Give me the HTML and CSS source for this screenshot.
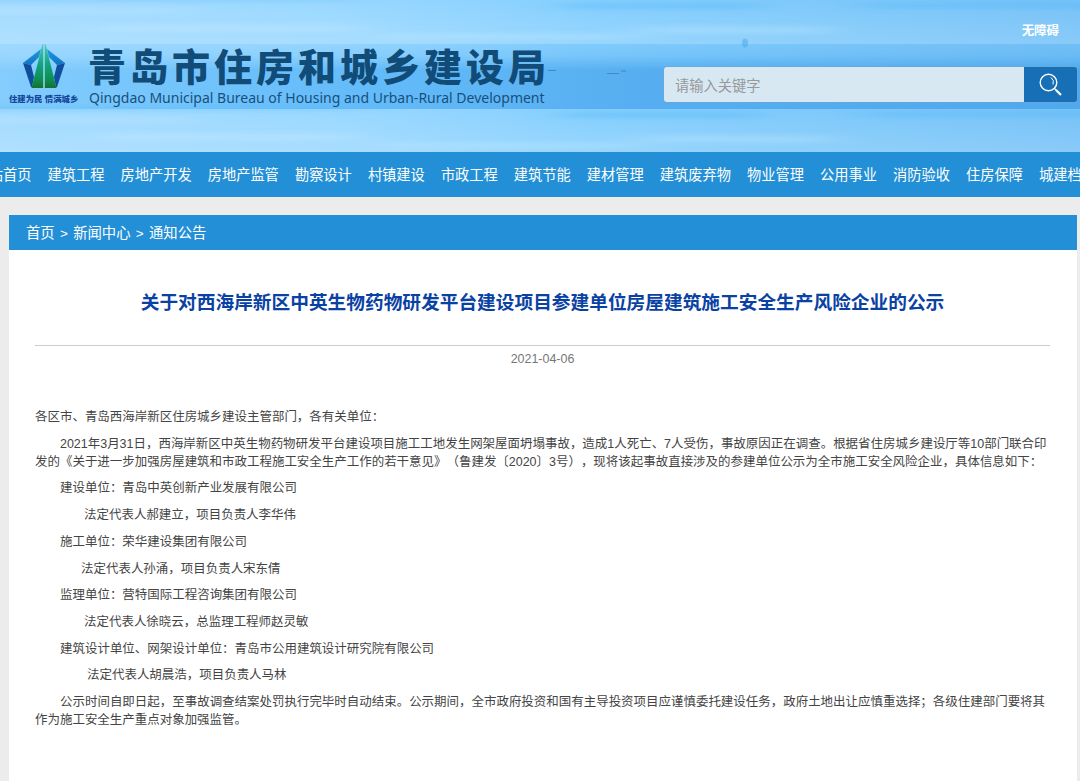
FILE: index.html
```html
<!DOCTYPE html>
<html lang="zh-CN">
<head>
    <meta charset="UTF-8">
    <meta name="viewport" content="width=device-width, initial-scale=1.0">
    <title>青岛市住房和城乡建设局</title>
    <link rel="stylesheet" href="styles.css">
</head>
<body>
    <header class="header">
        <!-- sea and sky backdrop -->
        <svg class="sky" width="1080" height="152" viewBox="0 0 1080 152" preserveAspectRatio="none" aria-hidden="true">
            <defs>
                <linearGradient id="air" x1="0" x2="1" y1="0" y2="0">
                    <stop offset="0" stop-color="#a3dbff"/>
                    <stop offset=".3" stop-color="#9ad8ff"/>
                    <stop offset=".55" stop-color="#85cffe"/>
                    <stop offset="1" stop-color="#76c2f7"/>
                </linearGradient>
                <linearGradient id="sea" x1="0" x2="1" y1="0" y2="0">
                    <stop offset="0" stop-color="#84cdfd"/>
                    <stop offset=".3" stop-color="#66bdfa"/>
                    <stop offset=".6" stop-color="#56aef0"/>
                    <stop offset="1" stop-color="#4fa9ec"/>
                </linearGradient>
                <linearGradient id="fade" x1="0" x2="0" y1="0" y2="1">
                    <stop offset="0" stop-color="#fff" stop-opacity="0"/>
                    <stop offset="1" stop-color="#fff" stop-opacity=".14"/>
                </linearGradient>
                <linearGradient id="top" x1="0" x2="0" y1="0" y2="1">
                    <stop offset="0" stop-color="#fff" stop-opacity=".12"/>
                    <stop offset=".18" stop-color="#fff" stop-opacity=".3"/>
                    <stop offset=".4" stop-color="#fff" stop-opacity="1"/>
                </linearGradient>
                <mask id="seamask"><rect y="44" width="1080" height="65" fill="url(#top)"/></mask>
                <filter id="soft" filterUnits="userSpaceOnUse" x="-60" y="-20" width="1200" height="90"><feGaussianBlur stdDeviation="22 2.500"/></filter>
                <g id="clouds" filter="url(#soft)">
                    <path d="M-40 -2h400v3H-40zM560 3h200v6H560zM860 3h260v5H860z" fill="#4fb4f7" opacity=".4"/>
                    <path d="M-40 9h230v4H-40zM100 25h260v6H100zM380 34h260v5H380zM640 27h190v6H640z" fill="#d6f0ff" opacity=".28"/>
                </g>
            </defs>
            <rect width="1080" height="152" fill="url(#air)"/>
            <rect width="1080" height="44" fill="url(#fade)"/>
            <use href="#clouds"/>
            <rect y="44" width="1080" height="65" fill="url(#sea)" mask="url(#seamask)"/>
            <rect y="109" width="1080" height="43" fill="url(#fade)"/>
            <use href="#clouds" y="109"/>
            <path d="M607 73.500h12M621 71h5M548 70.500h8" stroke="#3b8cc9" stroke-width="1"/>
            <ellipse cx="745" cy="43" rx="3" ry="4.500" fill="#4aa6e4" opacity=".5"/>
        </svg>

        <div class="brand">
            <div class="emblem">
                <svg width="44" height="46" viewBox="0 0 44 46">
                    <defs>
                        <linearGradient id="tower" x1="0" x2="0" y1="0" y2="1">
                            <stop offset="0" stop-color="#4fc9c4"/>
                            <stop offset=".45" stop-color="#12a482"/>
                            <stop offset=".8" stop-color="#0c8f55"/>
                            <stop offset="1" stop-color="#157030"/>
                        </linearGradient>
                        <linearGradient id="wing" x1="0" x2="0" y1="0" y2="1">
                            <stop offset="0" stop-color="#1d9be2"/>
                            <stop offset="1" stop-color="#1273c2"/>
                        </linearGradient>
                    </defs>
                    <path d="M19 6L1 20l8 2 8-8z" fill="url(#wing)"/>
                    <path d="M25 6l18 14-8 2-8-8z" fill="url(#wing)"/>
                    <path d="M1 20l8 2 3 12-2 10H9z" fill="#114d9d"/>
                    <path d="M43 20l-8 2-3 12 2 10h1z" fill="#114d9d"/>
                    <path d="M20.500 1h1v44H9.500z" fill="url(#tower)"/>
                    <path d="M23.500 1h-1v44h12z" fill="url(#tower)"/>
                    <path d="M22 1v44" stroke="#a5dcec" stroke-width="1"/>
                </svg>
                <span class="slogan">住建为民 情满城乡</span>
            </div>
            <div class="names">
                <div class="name-cn">青岛市住房和城乡建设局</div>
                <div class="name-en">Qingdao Municipal Bureau of Housing and Urban-Rural Development</div>
            </div>
        </div>

        <div class="tools">
            <a class="barrier-free">无障碍</a>
            <form class="search">
                <input type="text" placeholder="请输入关键字">
                <button type="button" aria-label="搜索">
                    <svg width="24" height="24" viewBox="0 0 24 24" fill="none" stroke="#fff">
                        <circle cx="9.500" cy="9.500" r="8.300" stroke-width="1.400"/>
                        <path d="M12 4.500q3.500 2.500 2 7" stroke-width="1"/>
                        <path d="M15.500 15.500l2 2" stroke-width="1.300"/>
                        <path d="M17 17l5 5" stroke-width="2.200"/>
                    </svg>
                </button>
            </form>
        </div>
    </header>

    <nav class="nav">
        <a>网站首页</a>
        <a>建筑工程</a>
        <a>房地产开发</a>
        <a>房地产监管</a>
        <a>勘察设计</a>
        <a>村镇建设</a>
        <a>市政工程</a>
        <a>建筑节能</a>
        <a>建材管理</a>
        <a>建筑废弃物</a>
        <a>物业管理</a>
        <a>公用事业</a>
        <a>消防验收</a>
        <a>住房保障</a>
        <a>城建档案</a>
    </nav>

    <main class="main">
        <div class="crumbs"><a>首页</a><span>&gt;</span><a>新闻中心</a><span>&gt;</span><a>通知公告</a></div>
        <article class="article">
            <h1>关于对西海岸新区中英生物药物研发平台建设项目参建单位房屋建筑施工安全生产风险企业的公示</h1>
            <div class="date">2021-04-06</div>
            <div class="content">
                <p>各区市、青岛西海岸新区住房城乡建设主管部门，各有关单位：</p>
                <p class="indent">2021年3月31日，西海岸新区中英生物药物研发平台建设项目施工工地发生网架屋面坍塌事故，造成1人死亡、7人受伤，事故原因正在调查。根据省住房城乡建设厅等10部门联合印<br>发的《关于进一步加强房屋建筑和市政工程施工安全生产工作的若干意见》（鲁建发〔2020〕3号），现将该起事故直接涉及的参建单位公示为全市施工安全风险企业，具体信息如下：</p>
                <p class="indent">建设单位：青岛中英创新产业发展有限公司</p>
                <p class="person">法定代表人郝建立，项目负责人李华伟</p>
                <p class="indent">施工单位：荣华建设集团有限公司</p>
                <p class="person near">法定代表人孙涌，项目负责人宋东倩</p>
                <p class="indent">监理单位：营特国际工程咨询集团有限公司</p>
                <p class="person">法定代表人徐晓云，总监理工程师赵灵敏</p>
                <p class="indent">建筑设计单位、网架设计单位：青岛市公用建筑设计研究院有限公司</p>
                <p class="person far">法定代表人胡晨浩，项目负责人马林</p>
                <p class="indent">公示时间自即日起，至事故调查结案处罚执行完毕时自动结束。公示期间，全市政府投资和国有主导投资项目应谨慎委托建设任务，政府土地出让应慎重选择；各级住建部门要将其<br>作为施工安全生产重点对象加强监管。</p>
            </div>
        </article>
    </main>
</body>
</html>
```

FILE: styles.css
```css
* { box-sizing: border-box; }
body { margin: 0; height: 781px; display: flex; flex-direction: column; overflow: hidden; background: #ececec; color: #444; font-family: "Liberation Sans", "Noto Sans CJK SC", sans-serif; text-spacing-trim: space-all; }
.header { position: relative; flex: none; height: 152px; display: flex; justify-content: space-between; padding: 0 3px 0 9px; }
.sky { position: absolute; left: 0; top: 0; }
.brand { position: relative; display: flex; padding-top: 43px; }
.emblem { width: 79px; display: flex; flex-direction: column; align-items: flex-start; }
.emblem svg { margin-left: 13px; }
.slogan { margin-top: 4px; font-size: 8.400px; line-height: 12px; font-weight: 900; color: #15489c; white-space: nowrap; }
.names { color: #114b77; white-space: nowrap; }
.name-cn { height: 45px; font-family: "Noto Sans CJK SC", sans-serif; font-size: 38px; line-height: 43px; font-weight: 900; letter-spacing: 4px; }
.name-en { margin-left: 1px; font-family: "Noto Sans", sans-serif; font-size: 14px; line-height: 20px; color: #17507d; }

.tools { position: relative; width: 413px; display: flex; flex-direction: column; }
.barrier-free { align-self: flex-end; margin: 22px 18px 0 0; font-size: 12.460px; line-height: 18px; font-weight: bold; color: #fff; }
.search { display: flex; margin-top: 27px; height: 35px; border-radius: 3px; box-shadow: 0 0 0 1px rgba(130,160,185,0.35); overflow: hidden; }
.search input { flex: 1; min-width: 0; padding: 0 11px; border: none; background: #d7e8f3; font: 14.240px "Noto Sans CJK SC", sans-serif; }
.search input::placeholder { color: #999; }
.search button { width: 53px; padding: 0; border: none; background: #176fb5; display: flex; align-items: center; justify-content: center; }

.nav { flex: none; display: flex; gap: 16.050px; height: 45px; padding-top: 1px; margin-left: -25.500px; background: #238fd6; color: #fff; font-size: 14.240px; line-height: 45px; white-space: nowrap; }
.nav a { flex: none; }

.main { flex: 1; margin: 18px 3px 0 9px; background: #fff; }
.crumbs { display: flex; gap: 5.300px; height: 35px; padding-left: 17px; background: #238fd6; color: #fff; font-size: 14.350px; line-height: 36px; }
.crumbs span { font-size: 13.500px; line-height: 38px; }
.article { padding: 0 27px 0 26px; }
h1 { margin: 0; padding-top: 40px; height: 96px; border-bottom: 1px solid #ccc; font-size: 18.700px; line-height: 26px; text-align: center; color: #0a42a3; white-space: nowrap; }
.date { height: 63px; font-size: 12.460px; line-height: 27px; text-align: center; color: #777; }
.content p { margin: 0 0 8.900px; font-size: 12.475px; line-height: 17.850px; white-space: nowrap; }
.indent { text-indent: 25px; }
.person { text-indent: 49px; }
.near { text-indent: 46px; }
.far { text-indent: 52px; }
```
